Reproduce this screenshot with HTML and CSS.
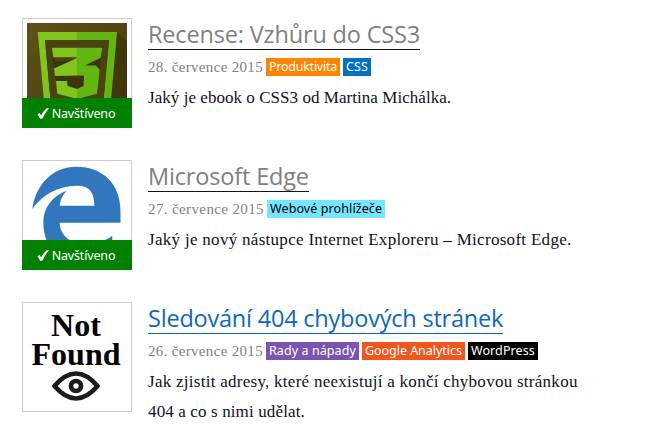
FILE: index.html
```html
<!DOCTYPE html>
<html lang="cs">
<head>
<meta charset="utf-8">
<title>Články</title>
<link rel="stylesheet" href="styles.css">
</head>
<body>
<main class="articles">
  <article class="article">
    <div class="thumb">
      <svg class="picture" viewBox="0 0 100 100">
        <defs>
          <linearGradient id="olive" x1="0" y1="0" x2="1" y2="1"><stop offset="0" stop-color="#5e5118"/><stop offset="1" stop-color="#453b0c"/></linearGradient>
        </defs>
        <path fill="url(#olive)" d="M0 0h100v100H0z"/>
        <path fill="#40370c" d="M90 9l10 10v81H82z"/>
        <path fill="#80c41c" d="M10.700 9H50v8H18l6 66 26 8v9H19z"/>
        <path fill="#62b512" d="M50 9h40l-8 91H50v-9l26-8 6-66H50z"/>
        <path fill="#4c420f" d="M18 17h64l-6 66-26 8-26-8z"/>
        <path fill="#3c340c" d="M25 34l5 5 18-2-21 9zM29 58l11 5 10 3 7-3 1-10H28zM58 42l16-8-1 13z"/>
        <path fill="#80c41c" d="M25 24.700H50.200V52.600L28 53 27 45.600 50 35V34.300H26.300zM29 58H40L40.600 63 50.200 66V76L30.300 70.700z"/>
        <path fill="#62b512" d="M50 24.700H75.300L73.700 34.700 58 42.500H69L72.700 47 70 70.700 50 76V66L56.500 63 57 52.500H50z"/>
      </svg>
      <div class="visited"><svg class="check" viewBox="0 0 12 11"><path d="M.5 6.300L2.800 5 4 7.400Q6.500 3 9.600.3H12Q7.800 5 5.300 10.800H3.200z"/></svg><span>Navštíveno</span></div>
    </div>
    <div class="text">
      <h2 class="title"><a class="seen" href="#">Recense: Vzhůru do CSS3</a></h2>
      <div class="meta"><time>28. července 2015</time><a class="tag orange">Produktivita</a><a class="tag blue">CSS</a></div>
      <p class="tight">Jaký je ebook o CSS3 od Martina Michálka.</p>
    </div>
  </article>
  <article class="article">
    <div class="thumb">
      <svg class="picture" viewBox="0 0 100 100">
        <path fill="#3277bd" d="M5.300 44C9 18 27 1.700 49 1.700C77 1.700 93.500 20 93.500 46V57.700H32.700C33 71 44 79 60 79C70 79 78 76 85.300 70.700V92C77 97 68 99 58 99C35 99 16.300 85 16.300 57C16.300 43 25 31 39.700 25.700Q33.500 32 32.700 40.700H67.300C67.300 28 63 20.700 50 20.700C31 20.700 15 30 5.300 44z"/>
      </svg>
      <div class="visited"><svg class="check" viewBox="0 0 12 11"><path d="M.5 6.300L2.800 5 4 7.400Q6.500 3 9.600.3H12Q7.800 5 5.300 10.800H3.200z"/></svg><span>Navštíveno</span></div>
    </div>
    <div class="text">
      <h2 class="title"><a class="seen" href="#">Microsoft Edge</a></h2>
      <div class="meta"><time class="wide">27. července 2015</time><a class="tag cyan">Webové prohlížeče</a></div>
      <p>Jaký je nový nástupce Internet Exploreru – Microsoft Edge.</p>
    </div>
  </article>
  <article class="article">
    <div class="thumb">
      <div class="missing">Not<br>Found
        <svg class="eye" viewBox="0 0 48 30"><path d="M2.500 15Q24-10 45.500 15Q24 40 2.500 15z"/><circle cx="24" cy="15" r="5"/></svg>
      </div>
    </div>
    <div class="text">
      <h2 class="title"><a class="long" href="#">Sledování 404 chybových stránek</a></h2>
      <div class="meta"><time>26. července 2015</time><a class="tag purple">Rady a nápady</a><a class="tag red">Google Analytics</a><a class="tag black">WordPress</a></div>
      <p class="summary">Jak zjistit adresy, které neexistují a končí chybovou stránkou<br><span class="last">404 a co s nimi udělat.</span></p>
    </div>
  </article>
</main>
</body>
</html>
```
FILE: styles.css
```css
body { margin: 0; background: #fff; color: #111122; }
.articles { box-sizing: border-box; min-height: 438px; display: flex; flex-direction: column; gap: 32px; padding: 18px 22px 0; }
.article { display: flex; gap: 16px; min-height: 110px; }
.thumb { box-sizing: border-box; width: 110px; height: 110px; flex: none; padding: 4px; border: 1px solid #ccc; position: relative; }
.picture { display: block; width: 100px; height: 100px; }
.visited { position: absolute; left: -1px; right: -1px; bottom: -1px; height: 30px; display: flex; align-items: center; justify-content: center; gap: 3px; padding-right: 2px; box-sizing: border-box; background: #008000; color: #fff; font: 12.5px "Noto Sans", sans-serif; letter-spacing: -.16px; }
.check { width: 12px; height: 11px; fill: #fff; }
.missing { margin-right: 2px; text-align: center; font: bold 32px/29px "Liberation Serif", serif; color: #000; padding-top: 4px; }
.eye { display: block; width: 48px; height: 30px; margin: 2px auto 0; fill: none; stroke: #1c1c1c; stroke-width: 4.7; stroke-linejoin: round; }
.text { flex: none; white-space: nowrap; }
.title { margin: 0; height: 32px; font: 400 23.5px/32px "Open Sans", sans-serif; letter-spacing: -.165px; }
.title a { display: inline-block; height: 31px; border-bottom: 1px solid #0d68b8; color: #0d68b8; text-decoration: none; }
.title .seen { color: #808080; border-color: #111122; }
.title .long { letter-spacing: -.21px; }
.meta { display: flex; gap: 3px; height: 18px; margin-top: 8px; font: 15px/18px "Liberation Serif", serif; color: #808080; }
time { width: 115px; letter-spacing: .32px; }
time.wide { width: 116px; letter-spacing: .38px; }
.tag { font: 12.5px/18px "Noto Sans", sans-serif; color: #fff; padding: 0 3px; }
.orange { background: #ff8500; letter-spacing: -.25px; }
.blue { background: #0072c0; letter-spacing: .13px; }
.cyan { background: #75e6ff; color: #000; letter-spacing: .1px; }
.purple { background: #7a55b0; letter-spacing: .08px; }
.red { background: #f1561f; letter-spacing: -.03px; }
.black { background: #000; letter-spacing: .11px; }
p { margin: 7px 0 0; font: 17px/30px "Liberation Serif", serif; letter-spacing: .295px; }
.tight { letter-spacing: .045px; }
.summary { letter-spacing: .27px; }
.last { letter-spacing: .13px; }
```
